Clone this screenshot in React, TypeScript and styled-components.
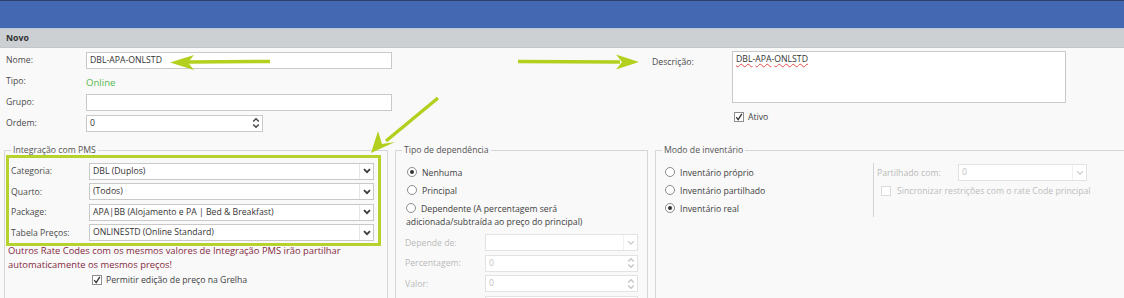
import React from 'react';
import styled, { createGlobalStyle } from 'styled-components';

const GlobalStyle = createGlobalStyle`
  html, body {
    margin: 0;
    padding: 0;
    background: #f9f9f9;
  }
  body {
    font-family: 'Open Sans', 'Noto Sans', sans-serif;
    font-size: 8.7px;
    color: #454545;
  }
`;

const Page = styled.div`
  position: relative;
  width: 1124px;
  height: 298px;
  overflow: hidden;
  background: #f9f9f9;
`;

const TopBar = styled.div`
  height: 27px;
  background: #4468b1;
  border-top: 1px solid #2c3f6c;
  border-bottom: 1px solid #b9c8df;
`;

const Header = styled.div`
  height: 18px;
  line-height: 18px;
  padding-left: 6px;
  background: #cdd0d3;
  border-bottom: 1px solid #c3c6c9;
  font-weight: 700;
  color: #333;
`;

const TopSection = styled.div`
  display: flex;
  padding: 3px 0 0 6px;
  height: 92px;
`;

const FormGrid = styled.div<{ $label: number; $field: number }>`
  display: grid;
  grid-template-columns: ${({ $label }) => $label}px ${({ $field }) => $field}px;
  grid-auto-rows: 18px;
  row-gap: 3px;
  align-items: center;
  align-content: start;
`;

const Label = styled.div<{ $disabled?: boolean }>`
  color: ${({ $disabled }) => ($disabled ? '#b9b9b9' : '#4a4a4a')};
  white-space: nowrap;
`;

const Box = styled.div<{ $width?: number; $disabled?: boolean }>`
  position: relative;
  box-sizing: border-box;
  height: 17px;
  width: ${({ $width }) => ($width ? `${$width}px` : '100%')};
  background: #fff;
  border: 1px solid ${({ $disabled }) => ($disabled ? '#e2e2e2' : '#c9c9c9')};
  padding: 0 3px;
  line-height: 15px;
  color: ${({ $disabled }) => ($disabled ? '#c4c4c4' : '#333')};
  white-space: nowrap;
  overflow: hidden;
  display: flex;
  align-items: center;
`;

const BoxText = styled.span`
  flex: 1;
`;

const SideButton = styled.span<{ $disabled?: boolean; $plain?: boolean }>`
  width: 13px;
  height: 100%;
  margin-right: -3px;
  display: flex;
  align-items: center;
  justify-content: center;
  border-left: 1px solid
    ${({ $disabled, $plain }) => ($plain ? 'transparent' : $disabled ? '#f0f0f0' : '#e6e6e6')};
`;

const TextArea = styled.div`
  box-sizing: border-box;
  width: 334px;
  height: 52px;
  background: #fff;
  border: 1px solid #c9c9c9;
  padding: 1px 3px;
  color: #333;
`;

const Squiggle = styled.span`
  text-decoration: underline wavy #e05050;
  text-decoration-thickness: 1px;
  text-underline-offset: 1px;
`;

const Online = styled.div`
  color: #55b84f;
  font-size: 9.6px;
  padding: 2px 0 0 0;
`;

const RightForm = styled.div`
  margin-left: 260px;
  display: grid;
  grid-template-columns: 80px 334px;
  align-content: start;
`;

const CheckRow = styled.label<{ $disabled?: boolean }>`
  display: flex;
  align-items: center;
  gap: 4px;
  color: ${({ $disabled }) => ($disabled ? '#bdbdbd' : '#3f3f3f')};
  white-space: nowrap;
`;

const CheckBox = styled.span<{ $disabled?: boolean }>`
  box-sizing: border-box;
  width: 10px;
  height: 10px;
  background: #fff;
  border: 1px solid ${({ $disabled }) => ($disabled ? '#dadada' : '#8e8e8e')};
  display: flex;
  align-items: center;
  justify-content: center;
`;

const AtivoRow = styled(CheckRow)`
  grid-column: 2;
  margin-top: 8px;
  margin-left: 2px;
`;

const Groups = styled.div`
  display: flex;
  gap: 7px;
  padding-left: 4px;
  margin-top: 1px;
`;

const Group = styled.fieldset<{ $width: number }>`
  box-sizing: border-box;
  width: ${({ $width }) => $width}px;
  height: 170px;
  flex-shrink: 0;
  margin: 0;
  padding: 0;
  border: 1px solid #d6d6d6;
  min-inline-size: 0;
`;

const Legend = styled.legend`
  margin-left: 6px;
  padding: 0 2px;
  line-height: 12px;
  color: #555;
`;

const Highlight = styled.div`
  box-sizing: border-box;
  width: 375px;
  margin: -1px 0 0 1px;
  padding: 4px 3px 1px 2px;
  border: 3px solid #b6d22c;
  display: grid;
  grid-template-columns: 78px 285px;
  grid-auto-rows: 18px;
  row-gap: 2.5px;
  align-items: center;
`;

const Note = styled.div`
  margin: -2px 0 0 3px;
  line-height: 14px;
  color: #852a43;
  font-size: 9.4px;
`;

const GridCheck = styled(CheckRow)`
  margin: 2px 0 0 87px;
`;

const RadioList = styled.div<{ $pad: number }>`
  display: flex;
  flex-direction: column;
  gap: 5px;
  padding: 11px 0 0 ${({ $pad }) => $pad}px;
`;

const RadioRow = styled.div<{ $wrap?: boolean }>`
  line-height: 13px;
  color: #3f3f3f;
  margin-left: ${({ $wrap }) => ($wrap ? -1 : 0)}px;
`;

const RadioDot = styled.span<{ $on?: boolean }>`
  box-sizing: border-box;
  display: inline-block;
  vertical-align: -1px;
  width: 10px;
  height: 10px;
  margin-right: 5px;
  border-radius: 50%;
  border: 1px solid #8c8c8c;
  background: #fff;
  position: relative;
  &::after {
    content: '';
    display: ${({ $on }) => ($on ? 'block' : 'none')};
    position: absolute;
    left: 2px;
    top: 2px;
    width: 4px;
    height: 4px;
    border-radius: 50%;
    background: #333;
  }
`;

const DepGrid = styled(FormGrid)`
  padding-left: 9px;
  margin-top: 5px;
  row-gap: 3.5px;
  grid-auto-rows: 17px;
`;

const InventoryBody = styled.div`
  display: flex;
`;

const InventoryOptions = styled.div`
  width: 217px;
`;

const SharedPanel = styled.div`
  margin-top: 7px;
  height: 54px;
  border-left: 1px solid #d4d4d4;
  padding-left: 3px;
  display: flex;
  flex-direction: column;
  gap: 4px;
`;

const SharedRow = styled.div`
  display: grid;
  grid-template-columns: 81px 129px;
  align-items: center;
  padding-top: 1px;
`;

const SyncRow = styled(CheckRow)`
  margin-left: 4px;
  gap: 6px;
`;

const ArrowLayer = styled.svg`
  position: absolute;
  left: 0;
  top: 0;
  pointer-events: none;
`;

const Chevron = ({ disabled }: { disabled?: boolean }) => (
  <svg width="8" height="6" viewBox="0 0 8 6">
    <path
      d="M1 1.2 L4 4.2 L7 1.2"
      fill="none"
      stroke={disabled ? '#c9c9c9' : '#3a3a3a'}
      strokeWidth={disabled ? 1.2 : 1.8}
    />
  </svg>
);

const Spinner = ({ disabled }: { disabled?: boolean }) => (
  <svg width="8" height="12" viewBox="0 0 8 12">
    <path
      d="M1.2 4.5 L4 1.8 L6.8 4.5 M1.2 7.5 L4 10.2 L6.8 7.5"
      fill="none"
      stroke={disabled ? '#c6c6c6' : '#444'}
      strokeWidth={1.4}
    />
  </svg>
);

const Tick = ({ disabled }: { disabled?: boolean }) => (
  <svg width="8" height="8" viewBox="0 0 8 8">
    <path d="M1.2 4.2 L3.2 6.6 L6.8 0.8" fill="none" stroke={disabled ? '#ccc' : '#333'} strokeWidth={1.3} />
  </svg>
);

const Select = ({ value, width, disabled }: { value: string; width?: number; disabled?: boolean }) => (
  <Box $width={width} $disabled={disabled}>
    <BoxText>{value}</BoxText>
    <SideButton $disabled={disabled}>
      <Chevron disabled={disabled} />
    </SideButton>
  </Box>
);

const NumberBox = ({ value, width, disabled }: { value: string; width?: number; disabled?: boolean }) => (
  <Box $width={width} $disabled={disabled}>
    <BoxText>{value}</BoxText>
    <SideButton $disabled={disabled} $plain>
      <Spinner disabled={disabled} />
    </SideButton>
  </Box>
);

const pms = [
  { label: 'Categoria:', value: 'DBL (Duplos)' },
  { label: 'Quarto:', value: '(Todos)' },
  { label: 'Package:', value: 'APA|BB (Alojamento e PA | Bed & Breakfast)' },
  { label: 'Tabela Preços:', value: 'ONLINESTD (Online Standard)' },
];

const inventory = [
  { label: 'Inventário próprio', on: false },
  { label: 'Inventário partilhado', on: false },
  { label: 'Inventário real', on: true },
];

const App = () => {
  return (
    <Page>
      <GlobalStyle />
      <TopBar />
      <Header>Novo</Header>

      <TopSection>
        <FormGrid $label={80} $field={306}>
          <Label>Nome:</Label>
          <Box>DBL-APA-ONLSTD</Box>
          <Label>Tipo:</Label>
          <Online>Online</Online>
          <Label>Grupo:</Label>
          <Box />
          <Label>Ordem:</Label>
          <NumberBox value="0" width={177} />
        </FormGrid>

        <RightForm>
          <Label style={{ paddingTop: 5 }}>Descrição:</Label>
          <TextArea>
            <Squiggle>DBL</Squiggle>-<Squiggle>APA</Squiggle>-<Squiggle>ONLSTD</Squiggle>
          </TextArea>
          <AtivoRow>
            <CheckBox>
              <Tick />
            </CheckBox>
            Ativo
          </AtivoRow>
        </RightForm>
      </TopSection>

      <Groups>
        <Group $width={384}>
          <Legend>Integração com PMS</Legend>
          <Highlight>
            {pms.map((row) => (
              <React.Fragment key={row.label}>
                <Label>{row.label}</Label>
                <Select value={row.value} />
              </React.Fragment>
            ))}
          </Highlight>
          <Note>
            Outros Rate Codes com os mesmos valores de Integração PMS irão partilhar
            <br />
            automaticamente os mesmos preços!
          </Note>
          <GridCheck>
            <CheckBox>
              <Tick />
            </CheckBox>
            Permitir edição de preço na Grelha
          </GridCheck>
        </Group>

        <Group $width={253}>
          <Legend>Tipo de dependência</Legend>
          <RadioList $pad={11}>
            <RadioRow>
              <RadioDot $on />
              Nenhuma
            </RadioRow>
            <RadioRow>
              <RadioDot />
              Principal
            </RadioRow>
            <RadioRow $wrap>
              <RadioDot />
              Dependente (A percentagem será
              <br />
              adicionada/subtraída ao preço do principal)
            </RadioRow>
          </RadioList>
          <DepGrid $label={80} $field={153}>
            <Label $disabled>Depende de:</Label>
            <Select value="" disabled />
            <Label $disabled>Percentagem:</Label>
            <NumberBox value="0" disabled />
            <Label $disabled>Valor:</Label>
            <NumberBox value="0" disabled />
            <Label $disabled />
            <NumberBox value="" disabled />
          </DepGrid>
        </Group>

        <Group $width={480}>
          <Legend>Modo de inventário</Legend>
          <InventoryBody>
            <InventoryOptions>
              <RadioList $pad={9}>
                {inventory.map((item) => (
                  <RadioRow key={item.label}>
                    <RadioDot $on={item.on} />
                    {item.label}
                  </RadioRow>
                ))}
              </RadioList>
            </InventoryOptions>
            <SharedPanel>
              <SharedRow>
                <Label $disabled>Partilhado com:</Label>
                <Select value="0" disabled />
              </SharedRow>
              <SyncRow $disabled>
                <CheckBox $disabled />
                Sincronizar restrições com o rate Code principal
              </SyncRow>
            </SharedPanel>
          </InventoryBody>
        </Group>
      </Groups>

      <ArrowLayer width={1124} height={298} viewBox="0 0 1124 298">
        <g fill="#b3d01f" stroke="#b3d01f">
          <line x1="270" y1="61.5" x2="188" y2="62" strokeWidth="3.5" />
          <polygon points="170,62.5 194,55 188,62.5 194,70" stroke="none" />
          <line x1="518" y1="61.5" x2="620" y2="62" strokeWidth="3.5" />
          <polygon points="639,62 616,54.5 622,62 616,69.5" stroke="none" />
          <line x1="438" y1="98" x2="386" y2="141" strokeWidth="3.5" />
          <polygon points="371,153 378,131 382,144 395,142" stroke="none" />
        </g>
      </ArrowLayer>
    </Page>
  );
};

export default App;
